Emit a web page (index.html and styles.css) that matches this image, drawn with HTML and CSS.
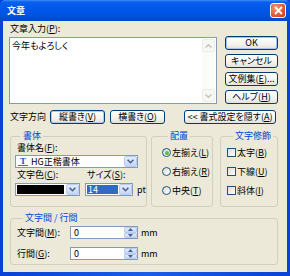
FILE: index.html
```html
<!DOCTYPE html>
<html lang="ja">

<head>
    <meta charset="utf-8">
    <title>文章</title>
    <link rel="stylesheet" href="styles.css">
</head>

<body>
    <div class="window">
        <div class="titlebar">
            <span class="title">文章</span>
            <span class="close">
                <svg width="9" height="9" viewBox="0 0 9 9">
                    <path d="M1 1 L8 8 M8 1 L1 8" stroke="#fff" stroke-width="1.8" fill="none"/>
                </svg>
            </span>
        </div>

        <div class="client">
            <div class="top">
                <div class="input_col">
                    <div class="field_label">文章入力(<u>P</u>):</div>
                    <div class="textarea">
                        <div class="textarea_text">今年もよろしく</div>
                        <div class="vscroll">
                            <div class="sb_btn">
                                <svg width="7" height="4" viewBox="0 0 7 4"><path d="M0.5 3.5 L3.5 0.8 L6.5 3.5" stroke="#c4c3b8" stroke-width="1.4" fill="none"/></svg>
                            </div>
                            <div class="sb_btn">
                                <svg width="7" height="4" viewBox="0 0 7 4"><path d="M0.5 0.5 L3.5 3.2 L6.5 0.5" stroke="#c4c3b8" stroke-width="1.4" fill="none"/></svg>
                            </div>
                        </div>
                    </div>
                </div>
                <div class="side_buttons">
                    <button class="btn btn_default">OK</button>
                    <button class="btn">キャンセル</button>
                    <button class="btn">文例集(<u>E</u>)...</button>
                    <button class="btn">ヘルプ(<u>H</u>)</button>
                </div>
            </div>

            <div class="dir_row">
                <span class="dir_label">文字方向</span>
                <button class="btn btn_dir valgt">縦書き(<u>V</u>)</button>
                <button class="btn btn_dir">横書き(<u>O</u>)</button>
                <button class="btn btn_hide">&lt;&lt; 書式設定を隠す(<u>A</u>)</button>
            </div>

            <div class="groups">
                <fieldset class="group group_font">
                    <legend>書体</legend>
                    <div class="field_label">書体名(<u>F</u>):</div>
                    <div class="combo combo_font">
                        <span class="combo_value"><span class="font_icon">T</span>HG正楷書体</span>
                        <span class="drop_btn">
                            <svg width="7" height="5" viewBox="0 0 7 5"><path d="M0.6 0.8 L3.5 3.7 L6.4 0.8" stroke="#4d6185" stroke-width="1.6" fill="none"/></svg>
                        </span>
                    </div>
                    <div class="font_row">
                        <div class="color_col">
                            <div class="field_label">文字色(<u>C</u>):</div>
                            <div class="combo combo_color">
                                <span class="swatch"></span>
                                <span class="drop_btn">
                                    <svg width="7" height="5" viewBox="0 0 7 5"><path d="M0.6 0.8 L3.5 3.7 L6.4 0.8" stroke="#4d6185" stroke-width="1.6" fill="none"/></svg>
                                </span>
                            </div>
                        </div>
                        <div class="size_col">
                            <div class="field_label">サイズ(<u>S</u>):</div>
                            <div class="size_line">
                                <div class="combo combo_size">
                                    <span class="size_value">14</span>
                                    <span class="drop_btn">
                                        <svg width="7" height="5" viewBox="0 0 7 5"><path d="M0.6 0.8 L3.5 3.7 L6.4 0.8" stroke="#4d6185" stroke-width="1.6" fill="none"/></svg>
                                    </span>
                                </div>
                                <span class="unit">pt</span>
                            </div>
                        </div>
                    </div>
                </fieldset>

                <fieldset class="group group_align">
                    <legend>配置</legend>
                    <div class="option"><span class="radio checked"></span>左揃え(<u>L</u>)</div>
                    <div class="option"><span class="radio"></span>右揃え(<u>R</u>)</div>
                    <div class="option"><span class="radio"></span>中央(<u>T</u>)</div>
                </fieldset>

                <fieldset class="group group_deco">
                    <legend>文字修飾</legend>
                    <div class="option"><span class="check"></span>太字(<u>B</u>)</div>
                    <div class="option"><span class="check"></span>下線(<u>U</u>)</div>
                    <div class="option"><span class="check"></span>斜体(<u>I</u>)</div>
                </fieldset>
            </div>

            <fieldset class="group group_spacing">
                <legend>文字間 / 行間</legend>
                <div class="spin_row">
                    <span class="spin_label">文字間(<u>M</u>):</span>
                    <div class="spin">
                        <span class="spin_value">0</span>
                        <span class="spin_btns">
                            <span class="spin_btn"><svg width="5" height="3" viewBox="0 0 5 3"><path d="M0 3 L2.5 0 L5 3 Z" fill="#4d6185"/></svg></span>
                            <span class="spin_btn"><svg width="5" height="3" viewBox="0 0 5 3"><path d="M0 0 L2.5 3 L5 0 Z" fill="#4d6185"/></svg></span>
                        </span>
                    </div>
                    <span class="unit">mm</span>
                </div>
                <div class="spin_row">
                    <span class="spin_label">行間(<u>G</u>):</span>
                    <div class="spin">
                        <span class="spin_value">0</span>
                        <span class="spin_btns">
                            <span class="spin_btn"><svg width="5" height="3" viewBox="0 0 5 3"><path d="M0 3 L2.5 0 L5 3 Z" fill="#4d6185"/></svg></span>
                            <span class="spin_btn"><svg width="5" height="3" viewBox="0 0 5 3"><path d="M0 0 L2.5 3 L5 0 Z" fill="#4d6185"/></svg></span>
                        </span>
                    </div>
                    <span class="unit">mm</span>
                </div>
            </fieldset>
        </div>
    </div>
</body>

</html>
```

FILE: styles.css
```css
* {
    box-sizing: border-box;
}

body {
    margin: 0;
    font-family: "Noto Sans CJK JP", sans-serif;
    font-size: 9px;
    line-height: 12px;
    color: #000;
    font-feature-settings: "palt";
}

u {
    text-decoration: underline;
    text-underline-offset: 1px;
}

.window {
    width: 290px;
    height: 276px;
    display: flex;
    flex-direction: column;
    background: linear-gradient(90deg, #0842d6, #1a5cea 50%, #0842d6);
}

.titlebar {
    height: 21px;
    display: flex;
    align-items: center;
    padding: 0 4px 0 7px;
    background: linear-gradient(#3d8ff8 0, #0a5ff0 2px, #0058e8 8px, #0052e0 16px, #0046cc 21px);
    border-radius: 5px 5px 0 0;
}

.title {
    color: #fff;
    font-weight: bold;
    font-size: 9px;
}

.close {
    margin-left: auto;
    width: 16px;
    height: 15px;
    border: 1px solid #fff;
    border-radius: 3px;
    background: radial-gradient(circle at 35% 30%, #f39a7a, #e2572f 60%, #c43a16);
    display: flex;
    align-items: center;
    justify-content: center;
}

.client {
    flex: 1;
    margin: 0 3px 4px 3px;
    background: #ece9d8;
    padding: 2px 9px 0 6px;
    display: flex;
    flex-direction: column;
}

.field_label {
    height: 12px;
    padding-left: 1px;
}

/* top part */

.top {
    display: flex;
    gap: 8px;
}

.input_col {
    width: 208px;
}

.textarea {
    margin-top: 2px;
    height: 67px;
    border: 1px solid #7f9db9;
    background: #fff;
    display: flex;
}

.textarea_text {
    flex: 1;
    padding: 2px 0 0 2px;
}

.vscroll {
    width: 13px;
    margin: 1px 1px 1px 0;
    background: #fbfbf8;
    display: flex;
    flex-direction: column;
    justify-content: space-between;
}

.sb_btn {
    height: 13px;
    border: 1px solid #eeede5;
    border-radius: 2px;
    background: #f7f7f3;
    display: flex;
    align-items: center;
    justify-content: center;
}

.side_buttons {
    width: 53px;
    margin-top: 13px;
    display: flex;
    flex-direction: column;
    gap: 4px;
}

.btn {
    height: 14px;
    padding: 0;
    border: 1px solid #003c74;
    border-radius: 3px;
    background: linear-gradient(#ffffff, #f5f4ef 55%, #e4e2d8);
    font-family: inherit;
    font-size: 9px;
    line-height: 12px;
    color: #000;
    font-feature-settings: "palt";
    white-space: nowrap;
}

.btn_default {
    box-shadow: inset 0 0 0 1px #a4c0f2;
}

/* direction row */

.dir_row {
    margin-top: 6px;
    height: 14px;
    display: flex;
    align-items: center;
    padding-left: 1px;
}

.dir_label {
    width: 40px;
}

.btn_dir {
    width: 55px;
}

.btn_dir+.btn_dir {
    margin-left: 5px;
}

.valgt {
    box-shadow: inset 0 0 0 1px #b2cbf4;
}

.btn_hide {
    width: 92px;
    margin-left: 19px;
}

/* group boxes */

.groups {
    margin-top: 6px;
    height: 77px;
    display: flex;
}

.group {
    margin: 0;
    padding: 0;
    min-width: 0;
    border: 1px solid #d0d0bf;
    border-radius: 3px;
}

.group legend {
    margin-left: 6px;
    padding: 0 2px;
    color: #0046d5;
    line-height: 12px;
}

.group_font {
    width: 137px;
    margin-left: 1px;
    padding: 0 0 0 4px;
}

.group_font .field_label {
    padding-left: 2px;
}

.combo {
    height: 13px;
    border: 1px solid #7f9db9;
    background: #fff;
    display: flex;
    align-items: stretch;
}

.combo_font {
    margin-top: 1px;
    width: 123px;
}

.combo_value {
    flex: 1;
    display: flex;
    align-items: center;
    padding-left: 2px;
}

.font_icon {
    font-family: "Liberation Serif", serif;
    font-weight: bold;
    color: #1e4fc2;
    font-size: 9px;
    width: 10px;
    border-bottom: 1px solid #d04030;
    line-height: 8px;
    text-align: center;
    margin-right: 3px;
}

.drop_btn {
    width: 13px;
    margin: 0;
    border: 1px solid #b9cbf3;
    border-radius: 2px;
    background: linear-gradient(#e3ecfd, #c6d5fc);
    display: flex;
    align-items: center;
    justify-content: center;
}

.font_row {
    display: flex;
    gap: 5px;
    margin-top: 1px;
}

.color_col .combo {
    margin-top: 2px;
    width: 65px;
}

.swatch {
    flex: 1;
    margin: 1px 2px 1px 1px;
    background: #000;
}

.size_line {
    display: flex;
    align-items: center;
    margin-top: 2px;
}

.combo_size {
    width: 48px;
}

.size_value {
    flex: 1;
    margin: 1px 1px 1px 1px;
    background: #316ac5;
    color: #fff;
    line-height: 9px;
    padding-left: 1px;
}

.unit {
    margin-left: 4px;
}

.group_align {
    width: 62px;
    margin-left: 4px;
    padding: 1px 0 0 10px;
}

.group_deco {
    width: 58px;
    margin-left: 7px;
    padding: 1px 0 0 6px;
}

.option {
    height: 19px;
    display: flex;
    align-items: center;
    white-space: nowrap;
}

.radio {
    width: 9px;
    height: 9px;
    border: 1px solid #1c5180;
    border-radius: 50%;
    background: linear-gradient(135deg, #dcdcd4, #fff);
    margin-right: 1px;
    display: flex;
    align-items: center;
    justify-content: center;
}

.radio.checked::after {
    content: "";
    width: 4px;
    height: 4px;
    border-radius: 50%;
    background: radial-gradient(circle at 40% 35%, #5fd25f, #21a121);
}

.check {
    width: 9px;
    height: 9px;
    border: 1px solid #1c5180;
    background: linear-gradient(135deg, #dcdcd4, #fff);
    margin-right: 1px;
}

.group_spacing {
    margin: 5px 0 0 1px;
    width: 268px;
    height: 53px;
    padding: 2px 0 0 6px;
}

.spin_row {
    height: 13px;
    display: flex;
    align-items: center;
}

.spin_row+.spin_row {
    margin-top: 8px;
}

.spin_label {
    width: 53px;
}

.spin {
    width: 68px;
    height: 13px;
    border: 1px solid #7f9db9;
    background: #fff;
    display: flex;
}

.spin_value {
    flex: 1;
    padding-left: 3px;
    line-height: 11px;
}

.spin_btns {
    width: 13px;
    display: flex;
    flex-direction: column;
}

.spin_btn {
    flex: 1;
    border: 1px solid #b9cbf3;
    border-radius: 1px;
    background: linear-gradient(#e3ecfd, #c6d5fc);
    display: flex;
    align-items: center;
    justify-content: center;
}

.spin_row .unit {
    margin-left: 3px;
}
```
